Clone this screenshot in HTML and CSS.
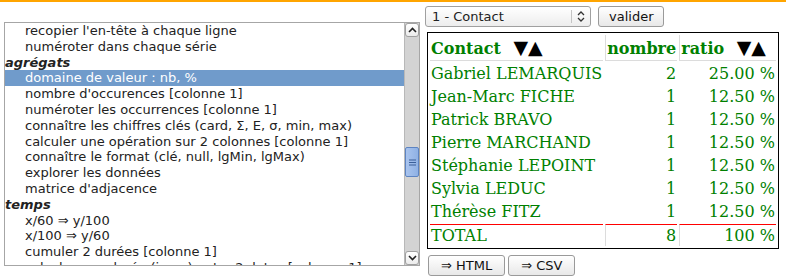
FILE: index.html
```html
<!DOCTYPE html>
<html lang="fr">
<head>
    <meta charset="UTF-8">
    <title>Agrégats</title>
    <link rel="stylesheet" href="styles.css">
</head>
<body>
    <div class="topline"></div>
    <div class="page">
        <div class="listbox">
            <div class="options">
                <div class="opt">recopier l'en-tête à chaque ligne</div>
                <div class="opt">numéroter dans chaque série</div>
                <div class="group">agrégats</div>
                <div class="opt selected">domaine de valeur : nb, %</div>
                <div class="opt">nombre d'occurences [colonne 1]</div>
                <div class="opt">numéroter les occurrences [colonne 1]</div>
                <div class="opt">connaître les chiffres clés (card, Σ, E, σ, min, max)</div>
                <div class="opt">calculer une opération sur 2 colonnes [colonne 1]</div>
                <div class="opt">connaître le format (clé, null, lgMin, lgMax)</div>
                <div class="opt">explorer les données</div>
                <div class="opt">matrice d'adjacence</div>
                <div class="group">temps</div>
                <div class="opt">x/60 ⇒ y/100</div>
                <div class="opt">x/100 ⇒ y/60</div>
                <div class="opt">cumuler 2 durées [colonne 1]</div>
                <div class="opt">calculer une durée (jours) entre 2 dates [colonne 1]</div>
            </div>
            <div class="scrollbar">
                <div class="sb-btn">
                    <svg width="9" height="6" viewBox="0 0 9 6"><path d="M1 5 L4.5 1.5 L8 5" fill="none" stroke="#222" stroke-width="1.6"/></svg>
                </div>
                <div class="sb-track">
                    <div class="sb-thumb">
                        <svg width="7" height="7" viewBox="0 0 7 7"><path d="M0 1H7M0 3.5H7M0 6H7" stroke="#3a5f99" stroke-width="1"/></svg>
                    </div>
                </div>
                <div class="sb-btn">
                    <svg width="9" height="6" viewBox="0 0 9 6"><path d="M1 1 L4.5 4.5 L8 1" fill="none" stroke="#222" stroke-width="1.6"/></svg>
                </div>
            </div>
        </div>

        <div class="result">
            <div class="toolbar">
                <div class="combo">
                    <span class="combo-label">1 - Contact</span>
                    <span class="combo-arrows">
                        <svg width="8" height="11" viewBox="0 0 8 11"><path d="M1 4 L4 1 L7 4 M1 7 L4 10 L7 7" fill="none" stroke="#333" stroke-width="1.3"/></svg>
                    </span>
                </div>
                <button class="btn">valider</button>
            </div>

            <table class="stats">
                <thead>
                    <tr>
                        <th>Contact <span class="sort">▼▲</span></th>
                        <th>nombre</th>
                        <th>ratio <span class="sort">▼▲</span></th>
                    </tr>
                </thead>
                <tbody>
                    <tr><td>Gabriel LEMARQUIS</td><td class="num">2</td><td class="num">25.00 %</td></tr>
                    <tr><td>Jean-Marc FICHE</td><td class="num">1</td><td class="num">12.50 %</td></tr>
                    <tr><td>Patrick BRAVO</td><td class="num">1</td><td class="num">12.50 %</td></tr>
                    <tr><td>Pierre MARCHAND</td><td class="num">1</td><td class="num">12.50 %</td></tr>
                    <tr><td>Stéphanie LEPOINT</td><td class="num">1</td><td class="num">12.50 %</td></tr>
                    <tr><td>Sylvia LEDUC</td><td class="num">1</td><td class="num">12.50 %</td></tr>
                    <tr><td>Thérèse FITZ</td><td class="num">1</td><td class="num">12.50 %</td></tr>
                    <tr class="total"><td>TOTAL</td><td class="num">8</td><td class="num">100 %</td></tr>
                </tbody>
            </table>

            <div class="exports">
                <button class="btn">⇒ HTML</button>
                <button class="btn">⇒ CSV</button>
            </div>
        </div>
    </div>
</body>
</html>
```

FILE: styles.css
```css
* {
    box-sizing: border-box;
}

body {
    margin: 0;
    font-family: 'DejaVu Sans', Verdana, sans-serif;
    font-size: 13px;
    color: #222;
    background: #fff;
}

.topline {
    height: 2px;
    background-color: #ffa500;
}

.page {
    display: flex;
    align-items: flex-start;
}

/* liste des traitements */
.listbox {
    display: flex;
    width: 416px;
    height: 244px;
    margin: 20px 0 0 4px;
    border: 1px solid #a6a6a6;
    overflow: hidden;
}

.options {
    flex: 1;
    overflow: hidden;
}

.opt,
.group {
    height: 15.8px;
    line-height: 15.8px;
    white-space: nowrap;
}

.opt {
    padding-left: 20px;
}

.group {
    font-weight: bold;
    font-style: italic;
}

.opt.selected {
    background-color: #709bcb;
    color: #fff;
}

.scrollbar {
    width: 15px;
    display: flex;
    flex-direction: column;
    background-color: #d3d3d3;
    border-left: 1px solid #b8b8b8;
}

.sb-btn {
    height: 14px;
    display: flex;
    align-items: center;
    justify-content: center;
    background: linear-gradient(#ffffff, #ececec);
    border: 1px solid #a0a0a0;
    border-radius: 3px;
}

.sb-track {
    flex: 1;
    padding-top: 110px;
}

.sb-thumb {
    height: 30px;
    display: flex;
    align-items: center;
    justify-content: center;
    background: linear-gradient(to right, #a9c4ee, #8fb1e4);
    border: 1px solid #5d84c2;
    border-radius: 2px;
}

/* partie droite */
.result {
    margin: 4px 0 0 5px;
}

.toolbar {
    display: flex;
    gap: 7px;
}

.combo {
    width: 166px;
    height: 21px;
    display: flex;
    align-items: center;
    border: 1px solid #a0a0a0;
    border-radius: 3px;
    background: linear-gradient(#ffffff, #ededed);
}

.combo-label {
    flex: 1;
    padding-left: 6px;
}

.combo-arrows {
    width: 19px;
    height: 13px;
    display: flex;
    align-items: center;
    justify-content: center;
    border-left: 1px solid #c4c4c4;
}

.btn {
    height: 21px;
    padding: 0 10px;
    font-family: 'DejaVu Sans', Verdana, sans-serif;
    font-size: 13px;
    color: #111;
    border: 1px solid #9a9a9a;
    border-radius: 3px;
    background: linear-gradient(#ffffff, #e8e8e8);
}

.stats {
    margin: 5px 0 0 2px;
    border: 1px solid #000;
    border-spacing: 2px;
    font-family: 'DejaVu Serif', 'Liberation Serif', serif;
    font-size: 16px;
    color: #008000;
}

.stats th {
    text-align: left;
    padding: 3px 1px 2px;
    border-bottom: 1px solid #dcdcdc;
    white-space: nowrap;
}

.stats th + th {
    border-left: 1px solid #dcdcdc;
}

.stats td {
    padding: 1px;
    white-space: nowrap;
}

.stats .num {
    text-align: right;
}

.sort {
    color: #000;
    padding: 0 9px 0 7px;
    font-family: 'DejaVu Sans', sans-serif;
    font-size: 19px;
    line-height: 1;
}

.stats .total td {
    border-top: 1px solid #f00;
}

.stats .total td + td {
    border-left: 1px solid #dcdcdc;
}

.exports {
    display: flex;
    gap: 3px;
    margin: 6px 0 0 3px;
}

.exports .btn {
    padding: 0 12px;
}
```
